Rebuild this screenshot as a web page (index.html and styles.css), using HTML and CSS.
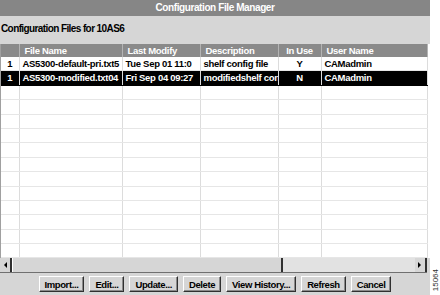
FILE: index.html
```html
<!DOCTYPE html>
<html lang="en">
<head>
    <meta charset="UTF-8">
    <title>Configuration File Manager</title>
    <link rel="stylesheet" href="styles.css">
</head>
<body>
    <div class="window">
        <div class="titlebar">Configuration File Manager</div>
        <div class="panel">Configuration Files for 10AS6</div>
        <div class="grid">
            <table class="files">
                <colgroup>
                    <col class="c-num"><col class="c-name"><col class="c-date">
                    <col class="c-desc"><col class="c-use"><col class="c-user">
                </colgroup>
                <thead>
                    <tr><th></th><th>File Name</th><th>Last Modify</th><th>Description</th><th class="center">In Use</th><th>User Name</th></tr>
                </thead>
                <tbody>
                    <tr><td class="center">1</td><td>AS5300-default-pri.txt5</td><td>Tue Sep 01 11:0</td><td>shelf config file</td><td class="center">Y</td><td>CAMadmin</td></tr>
                    <tr class="selected"><td class="center">1</td><td>AS5300-modified.txt04</td><td>Fri Sep 04 09:27</td><td>modifiedshelf con</td><td class="center">N</td><td>CAMadmin</td></tr>
                    <tr><td></td><td></td><td></td><td></td><td></td><td></td></tr>
                    <tr><td></td><td></td><td></td><td></td><td></td><td></td></tr>
                    <tr><td></td><td></td><td></td><td></td><td></td><td></td></tr>
                    <tr><td></td><td></td><td></td><td></td><td></td><td></td></tr>
                    <tr><td></td><td></td><td></td><td></td><td></td><td></td></tr>
                    <tr><td></td><td></td><td></td><td></td><td></td><td></td></tr>
                    <tr><td></td><td></td><td></td><td></td><td></td><td></td></tr>
                    <tr><td></td><td></td><td></td><td></td><td></td><td></td></tr>
                    <tr><td></td><td></td><td></td><td></td><td></td><td></td></tr>
                    <tr><td></td><td></td><td></td><td></td><td></td><td></td></tr>
                    <tr><td></td><td></td><td></td><td></td><td></td><td></td></tr>
                    <tr><td></td><td></td><td></td><td></td><td></td><td></td></tr>
                    <tr><td></td><td></td><td></td><td></td><td></td><td></td></tr>
                </tbody>
            </table>
        </div>
        <div class="hscroll">
            <div class="arrow"><svg width="4" height="6" viewBox="0 0 4 6"><polygon points="4,0 4,6 1,3" fill="#000"/></svg></div>
            <div class="thumb"></div>
            <div class="track"></div>
            <div class="arrow"><svg width="4" height="6" viewBox="0 0 4 6"><polygon points="0,0 0,6 3,3" fill="#000"/></svg></div>
        </div>
        <div class="actions">
            <button>Import...</button>
            <button>Edit...</button>
            <button>Update...</button>
            <button>Delete</button>
            <button>View History...</button>
            <button>Refresh</button>
            <button>Cancel</button>
        </div>
    </div>
    <div class="side">
        <span class="fignum">15064</span>
    </div>
</body>
</html>
```

FILE: styles.css
```css
body {
    margin: 0;
    display: flex;
    background: #fff;
    font-family: "Liberation Sans", Arial, sans-serif;
    font-weight: bold;
    font-size: 9.5px;
    letter-spacing: -0.3px;
}
.window {
    width: 430px;
    height: 295px;
    display: flex;
    flex-direction: column;
    background: #d6d6d6;
}
.titlebar {
    height: 16px;
    line-height: 16px;
    background: #868686;
    color: #fff;
    text-align: center;
    font-size: 10px;
    letter-spacing: -0.4px;
}
.panel {
    height: 28px;
    box-sizing: border-box;
    padding: 7px 0 0 1px;
    line-height: 12px;
    font-size: 10px;
    letter-spacing: -0.6px;
}
.grid {
    height: 214px;
    background: #fff;
    overflow: hidden;
    border-left: 1px solid #a0a0a0;
}
.files {
    width: 426px;
    table-layout: fixed;
    border-collapse: collapse;
}
.c-num { width: 18px; }
.c-name { width: 103px; }
.c-date { width: 78px; }
.c-desc { width: 78px; }
.c-use { width: 43px; }
.c-user { width: 106px; }
.files th {
    height: 13px;
    padding: 0 0 0 5px;
    background: #8a8a8a;
    color: #fff;
    text-align: left;
    border-right: 1px solid #b4b4b4;
    line-height: 12px;
    white-space: nowrap;
    overflow: hidden;
}
.files td {
    height: 13.4px;
    padding: 0 0 0 3px;
    line-height: 12px;
    border-right: 1px solid #dcdcdc;
    border-bottom: 1px solid #e6e6e6;
    white-space: nowrap;
    overflow: hidden;
}
.files .center {
    text-align: center;
    padding: 0;
}
.files .selected td {
    background: #000;
    color: #fff;
    border-bottom-color: #000;
}
.hscroll {
    width: 427px;
    height: 14px;
    display: flex;
    background: #e2e2e2;
    border-bottom: 1px solid #707070;
}
.arrow {
    width: 10px;
    display: flex;
    align-items: center;
    justify-content: center;
    background: #d6d6d6;
    border-right: 2px solid #303030;
}
.thumb {
    width: 268px;
    background: #d6d6d6;
    border-left: 1px solid #fff;
    border-right: 2px solid #303030;
}
.track {
    flex: 1;
}
.actions {
    flex: 1;
    display: flex;
    justify-content: center;
    align-items: flex-start;
    gap: 5px;
    padding-top: 3px;
}
.actions button {
    height: 16px;
    padding: 0 5px;
    font: inherit;
    letter-spacing: -0.4px;
    color: #000;
    background: #d6d6d6;
    border: 1px solid;
    border-color: #fff #303030 #303030 #fff;
    box-shadow: inset -1px -1px #8a8a8a;
}
.side {
    width: 10px;
    display: flex;
    flex-direction: column;
    justify-content: flex-end;
    align-items: center;
}
.fignum {
    writing-mode: vertical-rl;
    transform: rotate(180deg);
    margin-bottom: 4px;
    font: normal 8px "Liberation Sans", Arial, sans-serif;
    letter-spacing: 0;
    color: #333;
}
```
